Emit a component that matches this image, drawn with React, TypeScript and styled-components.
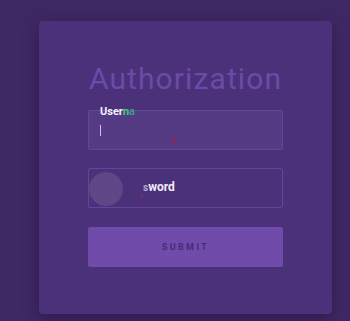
import React from 'react';
import styled, { createGlobalStyle } from 'styled-components';

const colors = {
  page: '#3f2964',
  card: '#4b3179',
  field: '#553b83',
  border: '#61479a',
  title: '#6c4aa8',
  button: '#714ba9',
  buttonText: '#452c78',
};

const GlobalStyle = createGlobalStyle`
  html, body {
    margin: 0;
    padding: 0;
    background: ${colors.page};
    font-family: Roboto, "Liberation Sans", sans-serif;
  }
`;

const Page = styled.div`
  width: 350px;
  height: 321px;
  padding: 21px 18px 0 39px;
  box-sizing: border-box;
  overflow: hidden;
`;

const Card = styled.form`
  width: 293px;
  height: 293px;
  box-sizing: border-box;
  background: ${colors.card};
  border-radius: 4px;
  box-shadow: 0 4px 16px rgba(30, 14, 60, 0.55);
  padding: 41px 49px 0 49px;
  display: flex;
  flex-direction: column;
`;

const Title = styled.h1`
  margin: 0;
  font-size: 30px;
  font-weight: 400;
  letter-spacing: 1.1px;
  color: ${colors.title};
  text-align: center;
  line-height: 34px;
  height: 48px;
`;

const Field = styled.div<{ $filled?: boolean; $indent: number }>`
  position: relative;
  height: 40px;
  box-sizing: border-box;
  display: flex;
  align-items: center;
  padding-left: ${(p) => p.$indent}px;
  border: 1px solid ${colors.border};
  border-radius: 2px;
  background: ${(p) => (p.$filled ? colors.field : 'transparent')};
  margin-bottom: 18px;
`;

const FloatLabel = styled.span`
  position: absolute;
  left: 11px;
  top: -5px;
  font-size: 11px;
  font-weight: 700;
  color: #f3eefa;
  line-height: 12px;
`;

const Green = styled.span<{ $fade?: boolean }>`
  color: ${(p) => (p.$fade ? '#3b9a80' : '#33d17a')};
`;

const Caret = styled.span`
  width: 1px;
  height: 11px;
  margin-top: 1px;
  background: #cdbfe6;
`;

const Dot = styled.span<{ $size: number }>`
  position: absolute;
  width: ${(p) => p.$size}px;
  height: ${(p) => p.$size}px;
  border-radius: 50%;
  background: #7a2e63;
`;

const Ripple = styled.span`
  position: absolute;
  left: 0;
  top: 3px;
  width: 34px;
  height: 34px;
  border-radius: 50%;
  background: #5f4686;
`;

const InlineLabel = styled.span`
  font-size: 12px;
  font-weight: 700;
  color: #f1ecf8;
  line-height: 12px;
  margin-top: -1px;
`;

const FadedS = styled.span`
  color: #b7a8d4;
  font-size: 10px;
`;

const Submit = styled.button`
  height: 40px;
  border: none;
  border-radius: 2px;
  background: ${colors.button};
  color: ${colors.buttonText};
  font-family: Roboto, "Liberation Sans", sans-serif;
  font-size: 9px;
  font-weight: 700;
  letter-spacing: 2.4px;
  text-transform: uppercase;
  margin-top: 1px;
`;

export default function App() {
  return (
    <>
      <GlobalStyle />
      <Page>
        <Card onSubmit={(e) => e.preventDefault()}>
          <Title>Authorization</Title>
          <Field $filled $indent={11}>
            <FloatLabel>
              User<Green>n</Green><Green $fade>a</Green>
            </FloatLabel>
            <Caret />
            <Dot $size={6} style={{ left: 82, top: 26 }} />
          </Field>
          <Field $indent={54}>
            <Ripple />
            <Dot $size={3} style={{ left: 51, top: 26 }} />
            <InlineLabel>
              <FadedS>s</FadedS>word
            </InlineLabel>
          </Field>
          <Submit type="submit">Submit</Submit>
        </Card>
      </Page>
    </>
  );
}
